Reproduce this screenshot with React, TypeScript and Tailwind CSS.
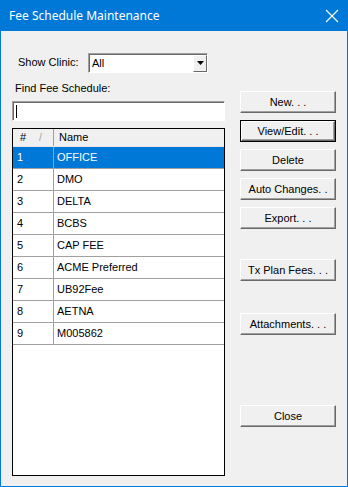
import React from "react";

const rows = [
  "OFFICE",
  "DMO",
  "DELTA",
  "BCBS",
  "CAP FEE",
  "ACME Preferred",
  "UB92Fee",
  "AETNA",
  "M005862",
];

function Btn({ label, top, isDefault }: { label: string; top: string; isDefault?: boolean }) {
  return (
    <div className={`${top} ${isDefault ? "border border-black" : ""}`}>
      <div
        className={`flex items-center justify-center bg-[#f0f0f0] border-t border-l border-white border-r border-b border-r-[#696969] border-b-[#696969] shadow-[inset_-1px_-1px_0_#a0a0a0] text-[11px] text-black ${
          isDefault ? "h-[20px]" : "h-[22px]"
        }`}
      >
        {label}
      </div>
    </div>
  );
}

export default function App() {
  return (
    <div className="w-[348px] h-[487px] flex flex-col bg-[#0078d7] font-['Liberation_Sans',Arial,sans-serif] select-none">
      <div className="h-[31px] flex items-center justify-between pl-[9px] pr-[8px] text-white">
        <span className="text-[12px] font-['Noto_Sans',sans-serif]">Fee Schedule Maintenance</span>
        <svg width="14" height="14" viewBox="0 0 14 14" className="mr-[1px]">
          <path d="M1 1 L13 13 M13 1 L1 13" stroke="white" strokeWidth="1.1" fill="none" />
        </svg>
      </div>
      <div className="flex-1 mx-px mb-px bg-[#f0f0f0] flex pl-[11px]">
        <div className="w-[213px] flex flex-col">
          <div className="mt-[22px] flex items-center h-[19px]">
            <span className="ml-[6px] w-[70px] text-[11px] text-black">Show Clinic:</span>
            <div className="w-[120px] h-[20px] flex border-t border-l border-[#a0a0a0] border-r border-b border-r-white border-b-white">
              <div className="flex-1 flex bg-white border-t border-l border-[#696969]">
                <span className="flex-1 pl-[2px] text-[11px] leading-[17px] text-black">All</span>
                <div className="w-[14px] h-[17px] flex items-center justify-center bg-[#f0f0f0] border-r border-b border-[#696969] border-t border-l border-t-white border-l-white">
                  <svg width="7" height="4" viewBox="0 0 7 4">
                    <path d="M0 0 H7 L3.5 4 Z" fill="black" />
                  </svg>
                </div>
              </div>
            </div>
          </div>
          <span className="mt-[9px] ml-[3px] text-[11px] leading-[14px] text-black">Find Fee Schedule:</span>
          <div className="mt-[6px] h-[20px] w-[213px] flex border-t border-l border-[#a0a0a0] border-r border-b border-r-white border-b-white">
            <div className="flex-1 bg-white border-t border-l border-[#696969] flex items-center pl-[2px]">
              <div className="w-px h-[13px] bg-black" />
            </div>
          </div>
          <div className="mt-[7px] h-[348px] w-[213px] border border-black bg-white flex flex-col">
            <div className="h-[18px] flex bg-[#f0f0f0] text-[11px] text-black border-b border-[#e5e5e5]">
              <div className="w-[41px] flex items-center pl-[7px] relative border-r border-[#a0a0a0]">
                #
                <span className="absolute left-[26px] text-[10px] text-[#a0a0a0]">/</span>
              </div>
              <div className="flex-1 flex items-center pl-[5px]">Name</div>
            </div>
            {rows.map((name, i) => (
              <div
                key={i}
                className={`h-[22px] flex text-[11px] border-b border-[#a0a0a0] ${
                  i === 0 ? "bg-[#0078d7] text-white" : "text-black"
                }`}
              >
                <div className="w-[41px] flex items-center pl-[4px] border-r border-[#a0a0a0]">{i + 1}</div>
                <div className="flex-1 flex items-center pl-[3px]">{name}</div>
              </div>
            ))}
          </div>
        </div>
        <div className="ml-[15px] w-[96px] flex flex-col">
          <Btn label="New. . ." top="mt-[60px]" />
          <Btn label="View/Edit. . ." top="mt-[7px]" isDefault />
          <Btn label="Delete" top="mt-[7px]" />
          <Btn label="Auto Changes. ." top="mt-[7px]" />
          <Btn label="Export. . ." top="mt-[7px]" />
          <Btn label="Tx Plan Fees. . ." top="mt-[30px]" />
          <Btn label="Attachments. . ." top="mt-[32px]" />
          <Btn label="Close" top="mt-[70px]" />
        </div>
      </div>
    </div>
  );
}
